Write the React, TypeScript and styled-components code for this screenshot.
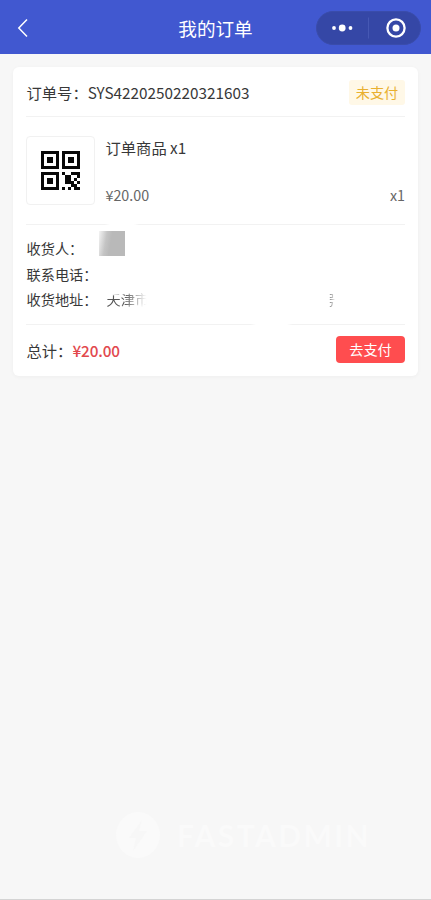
import React from "react";
import styled, { createGlobalStyle } from "styled-components";

const Global = createGlobalStyle`
  * { box-sizing: border-box; }
  body { margin: 0; background: #f7f7f7; font-family: "Noto Sans CJK SC", "Noto Sans", sans-serif; color: #383838; }
`;

const Page = styled.div`
  height: 900px;
  display: flex;
  flex-direction: column;
  background: #f7f7f7;
  border-bottom: 1px solid #d4d4d4;
  overflow: hidden;
`;

const Header = styled.header`
  height: 54px;
  flex: none;
  display: grid;
  grid-template-columns: 115px 1fr 115px;
  align-items: center;
  padding-top: 2px;
  background: #4158d0;
  color: #fff;
`;

const Back = styled.svg`
  width: 12px;
  height: 20px;
  margin-left: 17px;
`;

const Title = styled.h1`
  margin: 0;
  font-size: 18.6px;
  line-height: 26px;
  font-weight: 400;
  text-align: center;
`;

const Capsule = styled.div`
  width: 105px;
  height: 34px;
  border-radius: 17px;
  background: #3547a6;
  border: 1px solid #3a4cab;
`;

const Card = styled.main`
  margin: 13px 13px 0;
  height: 309px;
  flex: none;
  padding: 0 13px;
  display: flex;
  flex-direction: column;
  background: #fff;
  border-radius: 6px;
  box-shadow: 0 1px 4px rgba(0, 0, 0, 0.04);
`;

const Divider = styled.div<{ $gap?: [number, number] }>`
  height: 1px;
  flex: none;
  background: ${({ $gap }) =>
    $gap
      ? `linear-gradient(90deg, #f2f2f2 ${$gap[0] - 5}px, #fff ${$gap[0]}px, #fff ${$gap[1]}px, #f2f2f2 ${$gap[1] + 5}px)`
      : "#f2f2f2"};
`;

const OrderHead = styled.div`
  height: 49px;
  display: flex;
  align-items: center;
  justify-content: space-between;
  padding-top: 2px;
  font-size: 15.3px;
  white-space: nowrap;
`;

const OrderNumber = styled.span`
  padding: 0 0 2px 0.5px;
`;

const Status = styled.span`
  width: 56px;
  height: 25px;
  border-radius: 3px;
  background: #fff8e7;
  color: #e9b02f;
  font-size: 14.2px;
  line-height: 25px;
  text-align: center;
`;

const Product = styled.section`
  height: 107px;
  display: flex;
  padding-top: 19px;
`;

const Thumb = styled.div`
  width: 69px;
  height: 69px;
  flex: none;
  display: flex;
  align-items: center;
  padding-left: 14px;
  border: 1px solid #f1f1f1;
  border-radius: 4px;
`;

const ProductInfo = styled.div`
  flex: 1;
  height: 69px;
  margin-left: 10.5px;
  display: flex;
  flex-direction: column;
  justify-content: space-between;
`;

const ProductName = styled.div`
  font-size: 15.3px;
  line-height: 23px;
`;

const PriceRow = styled.div`
  display: flex;
  justify-content: space-between;
  font-size: 14.3px;
  line-height: 20px;
  color: #666;
`;

const Details = styled.section`
  height: 99px;
  padding-top: 10px;
`;

const Line = styled.div`
  display: flex;
  height: 25.6px;
  padding-left: 0.5px;
  line-height: 26px;
  font-size: 14.2px;
`;

const Label = styled.span`
  width: 80px;
  flex: none;
  white-space: nowrap;
`;

const Redaction = styled.span`
  width: 26px;
  height: 25px;
  margin: -4px 0 0 -8px;
  background: linear-gradient(100deg, #f4f4f4 0, #c4c4c4 28%, #b9b9b9 45%);
`;

const FadedStart = styled.span`
  width: 43px;
  white-space: nowrap;
  color: #555;
  mask-image: linear-gradient(175deg, transparent 30%, #000 36%, #000 68%, transparent 85%),
    linear-gradient(90deg, #000 40%, transparent 92%);
  mask-composite: intersect;
`;

const FadedEnd = styled.span`
  margin-left: 172px;
  color: #999;
  mask-image: linear-gradient(90deg, transparent 52%, #000 60%, transparent 95%);
`;

const Footer = styled.footer`
  flex: 1;
  display: flex;
  align-items: center;
  padding: 0 0 2px 0.5px;
  font-size: 15.3px;
`;

const Total = styled.strong`
  flex: 1;
  color: #e2484d;
  font-weight: 500;
  letter-spacing: -0.1px;
`;

const PayButton = styled.button`
  width: 69px;
  height: 27px;
  padding: 0;
  border: 0;
  border-radius: 4px;
  background: #ff4d4f;
  color: #fff;
  font: 14.2px/27px "Noto Sans CJK SC", sans-serif;
`;

const Watermark = styled.div`
  margin: auto 0 39px 115px;
  display: flex;
  align-items: center;
  gap: 16px;
  color: #fafafa;
  font: 700 30px/50px Lato, sans-serif;
  letter-spacing: 2.4px;
`;

const QR_ROWS = [
  "###### ######",
  "#    # #    #",
  "# ## # # ## #",
  "# ## # # ## #",
  "#    # #    #",
  "###### ######",
  "             ",
  "###### #  ###",
  "#    #  ##  #",
  "# ## #  ## # ",
  "# ## #  ### #",
  "#    #    ## ",
  "###### # # ##",
];

const QrCode = () => (
  <svg width="39" height="39" viewBox="0 0 13 13" shapeRendering="crispEdges">
    {QR_ROWS.flatMap((row, y) =>
      [...row].map((c, x) => (c === "#" ? <rect key={`${x}-${y}`} x={x} y={y} width="1" height="1" fill="#080808" /> : null))
    )}
  </svg>
);

export default function App() {
  return (
    <>
      <Global />
      <Page>
        <Header>
          <Back viewBox="0 0 12 20" fill="none" stroke="#fff" strokeWidth="1.5">
            <path d="M10 1.500 1.800 10 10 18.500" />
          </Back>
          <Title>我的订单</Title>
          <Capsule>
            <svg width="103" height="32" viewBox="0 0 103 32" fill="#fff">
              <circle cx="17" cy="16" r="1.9" />
              <circle cx="25.2" cy="16" r="3.4" />
              <circle cx="33.5" cy="16" r="1.9" />
              <path d="M51.500 5.500v21" stroke="#4658b4" />
              <circle cx="79" cy="16" r="8.600" fill="none" stroke="#fff" strokeWidth="2.300" />
              <circle cx="79" cy="16" r="3.500" />
            </svg>
          </Capsule>
        </Header>
        <Card>
          <OrderHead>
            <OrderNumber>订单号：SYS4220250220321603</OrderNumber>
            <Status>未支付</Status>
          </OrderHead>
          <Divider />
          <Product>
            <Thumb>
              <QrCode />
            </Thumb>
            <ProductInfo>
              <ProductName>订单商品 x1</ProductName>
              <PriceRow>
                <span>¥20.00</span>
                <span>x1</span>
              </PriceRow>
            </ProductInfo>
          </Product>
          <Divider $gap={[84, 108]} />
          <Details>
            <Line>
              <Label>收货人：</Label>
              <Redaction />
            </Line>
            <Line>
              <Label>联系电话：</Label>
            </Line>
            <Line>
              <Label>收货地址：</Label>
              <FadedStart>天津市</FadedStart>
              <FadedEnd>号</FadedEnd>
            </Line>
          </Details>
          <Divider $gap={[230, 261]} />
          <Footer>
            <span>总计：</span>
            <Total>¥20.00</Total>
            <PayButton>去支付</PayButton>
          </Footer>
        </Card>
        <Watermark>
          <svg width="46" height="50" viewBox="0 0 46 50" fill="#fafafa">
            <path fillRule="evenodd" d="M23 2a22 23 0 0 1 0 46a22 23 0 0 1 0-46ZM27 10 14 28h7l-3 13 14-20h-8Z" />
          </svg>
          <span>FASTADMIN</span>
        </Watermark>
      </Page>
    </>
  );
}
